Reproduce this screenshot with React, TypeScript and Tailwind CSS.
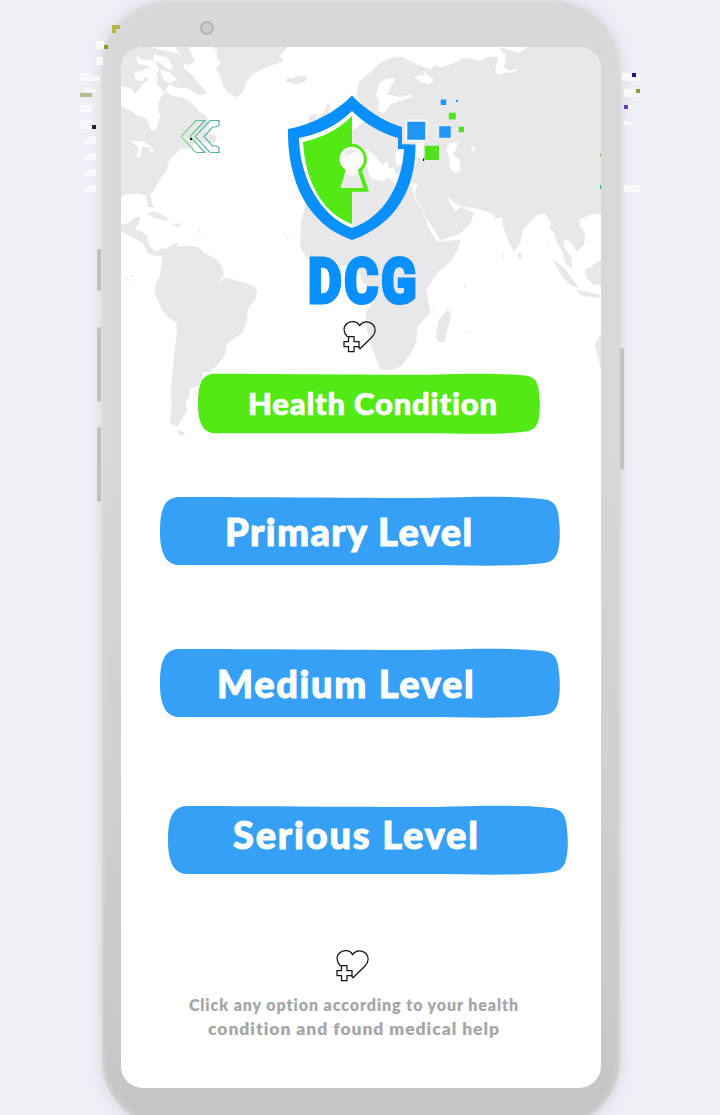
import React from "react";

const MAP = "#e8e8ea";

function WorldMap() {
  return (
    <svg className="absolute inset-0" width="480" height="1041" viewBox="121 47 480 1041" aria-hidden="true">
      <g fill={MAP} stroke={MAP} strokeWidth=".6" strokeLinejoin="round">
        <path d="M121 47H150L160 50L178 54L186 61L183 67L191 75L202 87L206 93L199 95L188 88L176 87L169 84L165 91L172 96L183 98L193 104L199 112L206 116L210 125L205 132L217 137L214 143L198 141L188 148L180 149L169 160L166 172L160 178L154 190L150 194L152 204L154 207L149 207L145 195L137 193L128 194L121 196Z" />
        <path d="M121 225L130 223L134 218L140 217L138 225L134 229L142 232L147 236L149 246L156 252L163 248L165 254L158 256L148 253L143 243L131 236L121 231Z" />
        <path d="M147 213L156 212L169 219L166 221L154 217ZM172 224L182 224L178 227ZM124 48L135 47L130 54ZM176 48L188 47L195 62L188 65Z" />
        <path d="M163 251L169 247L174 244L178 243L177 247L184 246L198 247L205 254L216 259L222 267L224 275L217 282L226 278L237 281L254 286L257 292L255 299L248 308L246 322L243 332L236 337L227 343L225 354L218 364L210 372L202 372L203 379L199 385L190 388L189 396L185 404L187 410L181 420L177 427L170 423L172 405L171 390L174 359L177 333L177 323L167 316L163 311L155 294L155 286L160 276L162 265Z" />
        <path d="M178 430L185 433L182 436L179 434Z" />
        <path d="M213 47H287L280 55L283 61L272 65L260 70L252 74L246 82L242 93L236 97L228 92L223 86L221 76L216 69L221 63L217 57L218 51Z" />
        <path d="M286 81L288 78L292 79L298 76L304 76L307 79L303 82L295 84Z" />
        <path d="M317 119L325 111L328 103L331 106L328 112L333 119L330 127L316 128L322 124ZM310 116L316 114L315 121L308 123Z" />
        <path d="M335 160L344 156L337 151L334 145L347 143L352 138L351 132L359 126L367 119L369 112L363 107L357 95L359 82L371 72L379 64L391 58L402 57L411 62L430 70L435 65L440 68L450 65L464 58L481 61L489 57L505 58L500 48L520 53L528 47H601V213L591 214L580 219L579 224L585 234L584 244L577 251L570 241L564 239L564 248L571 257L572 268L566 264L562 250L557 242L554 231L550 230L551 222L545 213L537 215L523 229L520 243L514 251L507 237L503 224L502 217L496 218L490 212L475 208L461 206L453 202L447 193L449 202L455 212L461 207L474 213L469 225L459 234L440 240L434 229L427 219L415 195L418 184L411 182L411 177L396 174L394 167L389 168L388 161L382 164L376 156L367 149L360 150L352 157L344 168L332 169Z" />
        <path d="M322 179L331 171L354 168L367 167L370 178L382 182L389 178L395 184L412 187L414 197L424 216L430 232L438 242L460 240L458 249L450 262L437 273L426 289L430 313L417 327L416 343L411 352L402 365L392 370L380 369L377 360L371 344L366 326L366 313L373 302L371 291L362 281L358 269L344 265L330 269L317 267L307 257L300 247L301 239L301 222L306 205L315 198Z" />
        <path d="M448 310L451 315L444 342L438 342L436 337L439 320Z" />
        <path d="M519 252L522 256L520 259L518 256ZM553 259L565 269L578 287L572 286L562 276ZM577 290L600 295V298L581 295ZM585 270L592 266L601 260V285L593 284L586 277ZM595 345L601 334V370L599 358Z" />
      </g>
      <g fill="#fff">
        <path d="M121 86L132 89L135 94L142 85L148 80L142 70L149 68L158 78L156 83L164 92L161 97L158 105L160 116L156 130L151 130L147 119L136 115L130 110L121 106Z" />
        <path d="M134 73L141 70L146 76L143 81L136 80ZM136 56L144 60L155 61L159 70L155 77L149 66L138 64ZM160 70L169 72L177 79L170 83L164 80ZM154 54L168 58L173 68L169 70L162 64L153 60Z" />
        <path d="M130 141L144 142L152 147L142 147L140 157L137 158L138 147ZM149 147L155 151L150 153Z" />
        <path d="M379 83L386 79L396 78L392 85L387 94L400 97L412 94L412 97L391 104L386 111L383 114L377 110L379 103L376 95Z" />
        <path d="M414 76L425 75L423 70L430 77L435 80L428 84L420 82ZM500 52L506 53L504 68L511 71L518 68L515 72L505 73L498 75L495 71Z" />
        <path d="M449 144L458 142L456 149L453 154L460 160L460 171L455 173L450 169L449 155L446 149ZM472 146L476 148L474 152L471 150ZM414 145L423 142L425 152L422 158L414 157ZM395 153L403 148L408 159L417 161L416 165L396 165Z" />
      </g>
      <g fill={MAP}>
        <circle cx="132" cy="276" r="1" /><circle cx="127" cy="279" r="1" /><circle cx="134" cy="280" r="1" />
        <circle cx="285" cy="234" r="1" /><circle cx="288" cy="238" r="1" /><circle cx="200" cy="238" r="1" />
        <circle cx="199" cy="230" r="1" /><circle cx="503" cy="256" r="1" /><circle cx="547" cy="243" r="1" />
        <circle cx="465" cy="287" r="1" /><circle cx="434" cy="307" r="1" /><circle cx="467" cy="332" r="1" />
      </g>
    </svg>
  );
}

function BackIcon() {
  return (
    <svg width="42" height="38" viewBox="179 118 42 38" fill="none" aria-hidden="true">
      <defs>
        <linearGradient id="back" x1="181" y1="0" x2="220" y2="0" gradientUnits="userSpaceOnUse">
          <stop stopColor="#93dd72" />
          <stop offset=".5" stopColor="#5db8a0" />
          <stop offset="1" stopColor="#56a3b5" />
        </linearGradient>
      </defs>
      <g stroke="url(#back)" strokeWidth="1.200">
        <path d="M181 136.500L196 120.500H205L190 136.500L205 152.500H196Z" />
        <path d="M195 136.500L210 120.500H219V125.500L216 127H212.500L204 136.500L212.500 146H216L219 147.500V152.500H210Z" />
      </g>
      <path d="M190 138H192V140H190Z" fill="#111" />
    </svg>
  );
}

function Logo() {
  return (
    <svg width="180" height="240" viewBox="285 92 180 240" role="img" aria-label="DCG">
      <path d="M352 111C337 125 320 134 299 138C300 178 319 216 352 228V224C320 212 305 178 303 142C322 138 339 129 352 116Z" fill="#fff" />
      <path fillRule="evenodd" fill="#0a90fc" d="M352 95.500C336 112 312 124.500 288 129C287 181 308 225 352 240C396 225 416 188 415.500 144.500H403V149H398V137.500H402V127C382 121 365 109 352 95.500ZM352 111C365 124 381 133 398 138V149H404C402 185 384 217 352 228C320 216 300 178 299 138C320 134 338 125 352 111Z" />
      <path d="M398 137H402V144.500H410V149H398Z" fill="#0a90fc" />
      <path d="M352 116C339 129 322 138 303 142C305 178 320 212 352 224Z" fill="#52e914" />
      <path d="M352 143.500A16 16 0 0 1 362 171L369 191.700H352Z" fill="#52e914" />
      <path d="M346 169.500L340.500 188H363.500L357.500 169.500Z" fill="#e8e8ea" />
      <circle cx="351.700" cy="159" r="12.200" fill="#fafafa" />
      <path d="M345 152L350 149L355 151L351 154L344 156Z" fill="#e8e8ea" />
      <path d="M346.500 168H357L359 174L352 176L344.500 174Z" fill="#fafafa" />
      <path d="M405 119.500H427.500V142H405Z" fill="#fff" fillOpacity=".55" />
      <path fill="#2195f3" d="M407.300 121.700H425.300V139.700H407.300ZM439.200 126.200H450.700V137.700H439.200ZM440.700 99.400H446.200V105H440.700ZM456 100H458V102H456Z" />
      <path d="M424.700 145.700H439V160H424.700ZM448.800 112.800H455.800V119.500H448.800ZM458.600 126.800H464V132.300H458.600Z" fill="#52e21b" />
      <path d="M423 158.500H424.200V161H423Z" fill="#111" />
      <text x="308" y="302.500" letterSpacing="3" textLength="111" lengthAdjust="spacingAndGlyphs" fill="#0a90fc" stroke="#0a90fc" strokeWidth="3" strokeLinejoin="miter" fontFamily="Roboto, sans-serif" fontWeight="900" fontSize="63">DCG</text>
    </svg>
  );
}

function HeartPlus() {
  return (
    <svg width="34" height="34" viewBox="0 0 34 34" fill="none" stroke="#151515" strokeWidth="1.250" aria-hidden="true">
      <path d="M4.500 17C0 12 0 7 4 3.500C8 .5 14 1 16.500 5.500C20 1 26 .5 30 4.500C33 8 33 13 29 17L17 28.800L15.500 27" />
      <path d="M5.500 16.500H11V21.500H16V26.500H11V31.500H5.500V26.500H1V21.500H5.500Z" />
    </svg>
  );
}

function LevelButton({ label, fill, className, textClass }: { label: string; fill: string; className: string; textClass: string }) {
  return (
    <button className={`relative flex shrink-0 items-start text-left font-[Lato,sans-serif] font-black whitespace-nowrap text-white ${className}`}>
      <svg className="absolute inset-0 h-full w-full" viewBox="0 0 400 70" preserveAspectRatio="none" aria-hidden="true">
        <path fill={fill} d="M18 1C90 1 190 2 265 2C310 1 350-.5 382 3C395 4 398 11 399 24C400.500 38 400 49 397 58C393 66 388 67 375 68C340 71 300 69 260 69H18C5 68 0 55 0 36C0 14 4 2 18 1Z" />
      </svg>
      <span className={`relative block ${textClass}`}>{label}</span>
    </button>
  );
}

function EdgePixels() {
  return (
    <svg className="absolute inset-0" width="720" height="1115" viewBox="0 0 720 1115" shapeRendering="crispEdges" aria-hidden="true">
      <path fill="#f8f8fa" d="M96 41H104V49H96ZM96 57H103V65H96ZM80 73H90V81H80ZM90 76H100V81H90ZM84 89H96V92H84ZM80 105H92V112H80ZM84 120H92V128H84ZM80 121H92V129H80ZM88 136H96V142H88ZM84 141H96V144H84ZM88 153H96V160H88ZM84 157H96V160H84ZM88 169H96V176H88ZM84 173H96V176H84ZM88 185H96V192H88ZM84 188H96V192H84ZM622 73H640V81H622ZM624 89H640V97H624ZM624 105H632V109H624ZM624 121H632V125H624ZM624 185H640V192H624Z" />
      <path fill="#b5b942" d="M112 25H120V29H116V33H112Z" />
      <path fill="#849b2c" d="M104 45H108V49H104Z" />
      <path fill="#babb91" d="M80 93H92V97H80Z" />
      <path fill="#20243a" d="M92 125H96V129H92Z" />
      <path fill="#211085" d="M632 73H636V77H632Z" />
      <path fill="#95942e" d="M636 89H640V93H636Z" />
      <path fill="#653cba" d="M624 105H628V109H624Z" />
      <path fill="#b7b56d" d="M600 153H601V157H600Z" />
      <path fill="#19b4a8" d="M600 185H601V189H600Z" />
    </svg>
  );
}

export default function App() {
  return (
    <main className="relative flex h-[1115px] w-[720px] items-start overflow-hidden bg-[#eff0f6] pt-px pl-[102px]">
      <div className="flex h-[1127px] w-[518px] shrink-0 flex-col rounded-[68px] bg-linear-to-b from-[#d8d8d8] from-40% to-[#c6c6c6] pt-[46px] pl-[19px] shadow-[0_0_14px_0_#cdced6,inset_0_0_4px_1px_#dcdcdc]">
        <section className="relative flex h-[1041px] w-[480px] shrink-0 flex-col overflow-hidden rounded-[22px] bg-white">
          <WorldMap />
          <header className="relative flex h-[261px] items-start pt-[45px] pl-[58px]">
            <button className="mt-[26px]" aria-label="Back"><BackIcon /></button>
            <div className="ml-[64px]"><Logo /></div>
          </header>
          <div className="relative mt-[12px] ml-[222px] h-[34px]"><HeartPlus /></div>
          <LevelButton label="Health Condition" fill="#52e914" className="mt-[19px] ml-[77px] h-[61px] w-[342px]" textClass="pl-[50px] text-[31px] leading-[61px] tracking-[0.8px] [-webkit-text-stroke:0.7px_white]" />
          <LevelButton label="Primary Level" fill="#35a0f5" className="mt-[62px] ml-[39px] h-[70px] w-[400px]" textClass="pl-[65px] text-[38px] leading-[70px] tracking-[1.4px] [-webkit-text-stroke:1px_white]" />
          <LevelButton label="Medium Level" fill="#35a0f5" className="mt-[82px] ml-[39px] h-[70px] w-[400px]" textClass="pl-[57px] text-[38px] leading-[70px] tracking-[1.65px] [-webkit-text-stroke:1px_white]" />
          <LevelButton label="Serious Level" fill="#35a0f5" className="mt-[87px] ml-[47px] h-[70px] w-[400px]" textClass="pl-[65px] text-[38px] leading-[58px] tracking-[1.8px] [-webkit-text-stroke:1px_white]" />
          <div className="mt-[74px] ml-[215px] h-[34px]"><HeartPlus /></div>
          <footer className="mt-[10px] ml-[-14px] text-center font-[Lato,sans-serif] font-extrabold text-[#a6a6a6]">
            <p className="text-[16px] leading-[24px] tracking-[0.9px]">Click any option according to your health</p>
            <p className="text-[17.5px] leading-[24px] tracking-[0.95px]">condition and found medical help</p>
          </footer>
        </section>
      </div>
      <div className="absolute top-[249px] left-[97px] h-[42px] w-[4px] rounded-sm bg-[#bfbfc1]" />
      <div className="absolute top-[327px] left-[97px] h-[75px] w-[4px] rounded-sm bg-[#bfbfc1]" />
      <div className="absolute top-[427px] left-[97px] h-[75px] w-[4px] rounded-sm bg-[#bfbfc1]" />
      <div className="absolute top-[348px] left-[620px] h-[122px] w-[4px] rounded-sm bg-[#c2c2c4]" />
      <div className="absolute top-[21px] left-[200px] size-[14px] rounded-full border-2 border-[#b4b4b4] bg-[#cbcbcb]" />
      <EdgePixels />
    </main>
  );
}
